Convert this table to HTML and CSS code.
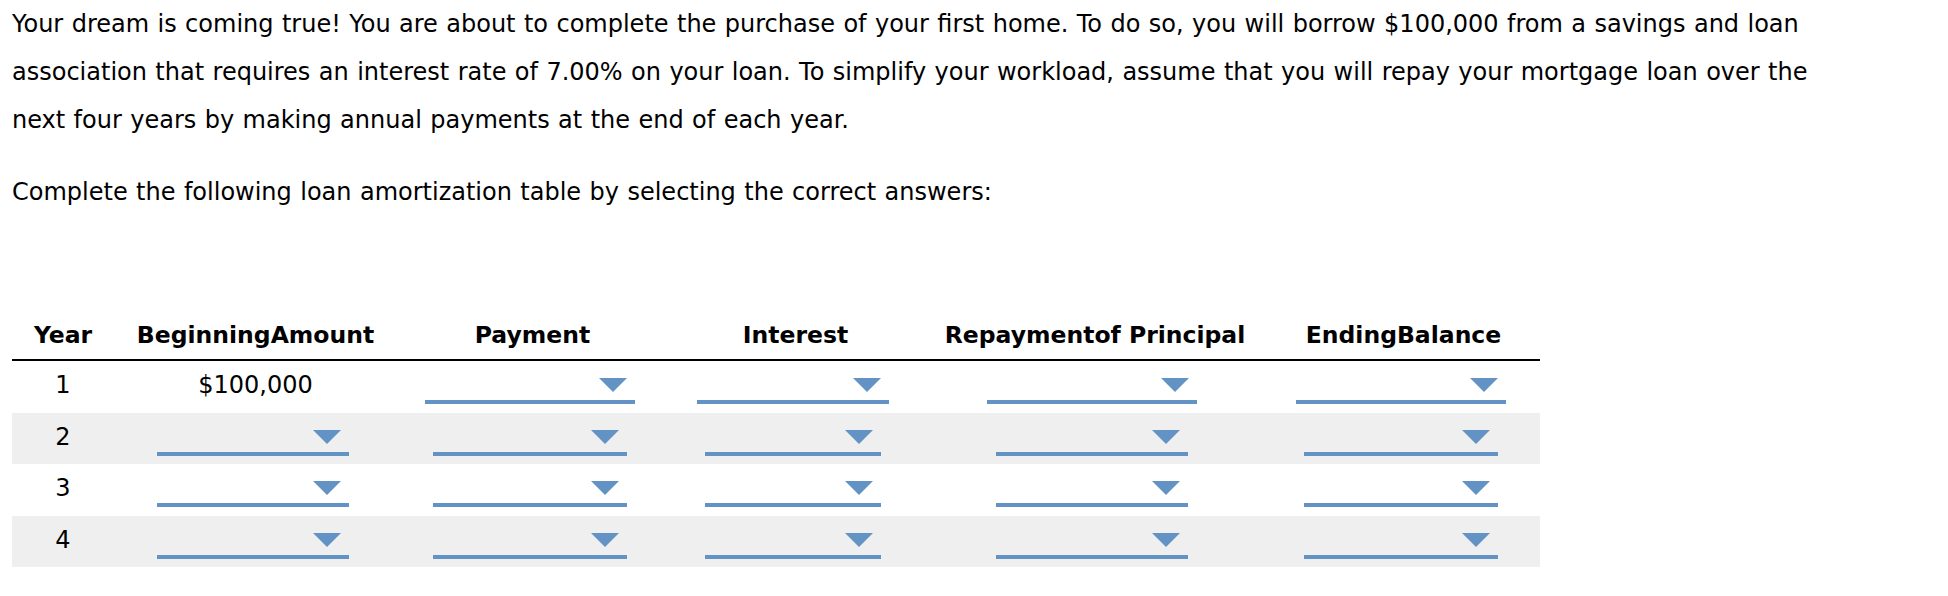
FILE: index.html
```html
<!DOCTYPE html>
<html lang="en">
<head>
<meta charset="utf-8">
<title>Loan amortization</title>
<link rel="stylesheet" href="styles.css">
</head>
<body>
<div class="page">
  <p class="intro">Your dream is coming true! You are about to complete the purchase of your first home. To do so, you will borrow $100,000 from a savings and loan association that requires an interest rate of 7.00% on your loan. To simplify your workload, assume that you will repay your mortgage loan over the next four years by making annual payments at the end of each year.</p>
  <p class="prompt">Complete the following loan amortization table by selecting the correct answers:</p>

  <table class="amort">
    <colgroup>
      <col class="c-year"><col class="c-begin"><col class="c-pay"><col class="c-int"><col class="c-rep"><col class="c-end">
    </colgroup>
    <thead>
      <tr>
        <th>Year</th>
        <th>BeginningAmount</th>
        <th>Payment</th>
        <th>Interest</th>
        <th>Repaymentof Principal</th>
        <th>EndingBalance</th>
      </tr>
    </thead>
    <tbody>
      <tr>
        <td>1</td>
        <td>$100,000</td>
        <td><span class="dd w210"><span class="arrow"></span></span></td>
        <td><span class="dd w192"><span class="arrow"></span></span></td>
        <td><span class="dd w210"><span class="arrow"></span></span></td>
        <td><span class="dd w210"><span class="arrow"></span></span></td>
      </tr>
      <tr class="alt">
        <td>2</td>
        <td><span class="dd w192"><span class="arrow"></span></span></td>
        <td><span class="dd w194"><span class="arrow"></span></span></td>
        <td><span class="dd w176"><span class="arrow"></span></span></td>
        <td><span class="dd w192"><span class="arrow"></span></span></td>
        <td><span class="dd w194"><span class="arrow"></span></span></td>
      </tr>
      <tr>
        <td>3</td>
        <td><span class="dd w192"><span class="arrow"></span></span></td>
        <td><span class="dd w194"><span class="arrow"></span></span></td>
        <td><span class="dd w176"><span class="arrow"></span></span></td>
        <td><span class="dd w192"><span class="arrow"></span></span></td>
        <td><span class="dd w194"><span class="arrow"></span></span></td>
      </tr>
      <tr class="alt">
        <td>4</td>
        <td><span class="dd w192"><span class="arrow"></span></span></td>
        <td><span class="dd w194"><span class="arrow"></span></span></td>
        <td><span class="dd w176"><span class="arrow"></span></span></td>
        <td><span class="dd w192"><span class="arrow"></span></span></td>
        <td><span class="dd w194"><span class="arrow"></span></span></td>
      </tr>
    </tbody>
  </table>
</div>
</body>
</html>
```

FILE: styles.css
```css
html, body {
  margin: 0;
  padding: 0;
  background: #ffffff;
}

body {
  font-family: "DejaVu Sans", Verdana, sans-serif;
  font-size: 24px;
  line-height: 48px;
  color: #000000;
}

.page {
  padding: 0 12px;
}

.intro {
  margin: 0;
  width: 1830px;
  word-spacing: 0.8px;
}

.prompt {
  margin: 24px 0 0;
  word-spacing: 0.8px;
}

.amort {
  margin-top: 96px;
  width: 1528px;
  border-collapse: collapse;
  table-layout: fixed;
}

.c-year { width: 102px; }
.c-begin { width: 283px; }
.c-pay { width: 271px; }
.c-int { width: 255px; }
.c-rep { width: 344px; }
.c-end { width: 273px; }

.amort th {
  height: 47px;
  padding: 0;
  font-size: 23.5px;
  line-height: 46px;
  font-weight: bold;
  text-align: center;
  vertical-align: top;
  white-space: nowrap;
  border-bottom: 2px solid #000000;
}

.amort td {
  height: 51.5px;
  padding: 0;
  text-align: center;
  vertical-align: top;
  line-height: 48px;
}

.amort tr.alt td {
  background: #efefef;
}

.dd {
  display: inline-flex;
  justify-content: flex-end;
  align-items: flex-end;
  vertical-align: top;
  box-sizing: border-box;
  height: 30px;
  margin-top: 13px;
  margin-right: 6px;
  padding: 0 8px 8px 0;
  border-bottom: 4px solid #6393c4;
}

.w176 { width: 176px; }
.w192 { width: 192px; }
.w194 { width: 194px; }
.w210 { width: 210px; }

.arrow {
  width: 0;
  height: 0;
  border-left: 14px solid transparent;
  border-right: 14px solid transparent;
  border-top: 14px solid #6393c4;
}
```
